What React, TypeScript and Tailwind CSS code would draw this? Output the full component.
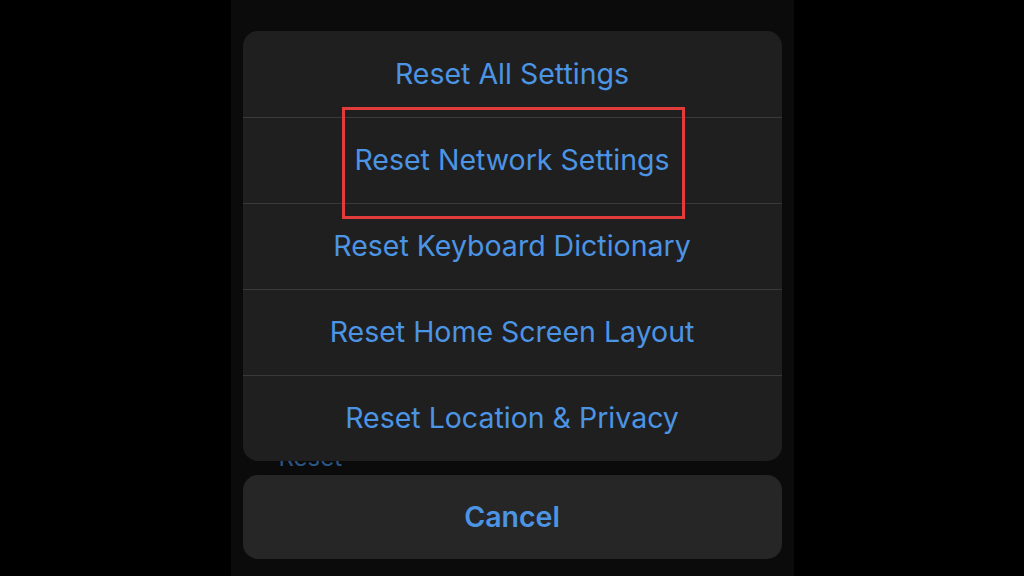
const items = [
  "Reset All Settings",
  "Reset Network Settings",
  "Reset Keyboard Dictionary",
  "Reset Home Screen Layout",
  "Reset Location & Privacy",
];

export default function App() {
  return (
    <div
      className="w-[1024px] h-[576px] bg-black flex justify-center overflow-hidden"
      style={{ fontFamily: "Inter, 'Liberation Sans', sans-serif" }}
    >
      <div className="relative w-[563px] h-full bg-[#0b0b0b] px-[12px] pt-[31px]">
        {/* page content peeking out behind the action sheet */}
        <span className="absolute left-[48px] top-[440px] text-[24px] text-[#2a5683]">Reset</span>

        <div className="relative rounded-[15px] bg-[#1f1f1f] overflow-hidden">
          {items.map((label, i) => (
            <div
              key={label}
              className={`h-[86px] flex items-center justify-center text-[28.5px] text-[#4c94e4] ${
                i > 0 ? "border-t border-[#3a3a3a]" : ""
              }`}
            >
              {label}
            </div>
          ))}
        </div>

        <div className="mt-[14px] h-[84px] rounded-[15px] bg-[#262626] flex items-center justify-center text-[28.5px] font-semibold text-[#4c94e4]">
          Cancel
        </div>

        {/* highlight box */}
        <div className="absolute left-[111px] top-[107px] w-[343px] h-[112px] border-[3px] border-[#e23b3b]" />
      </div>
    </div>
  );
}
